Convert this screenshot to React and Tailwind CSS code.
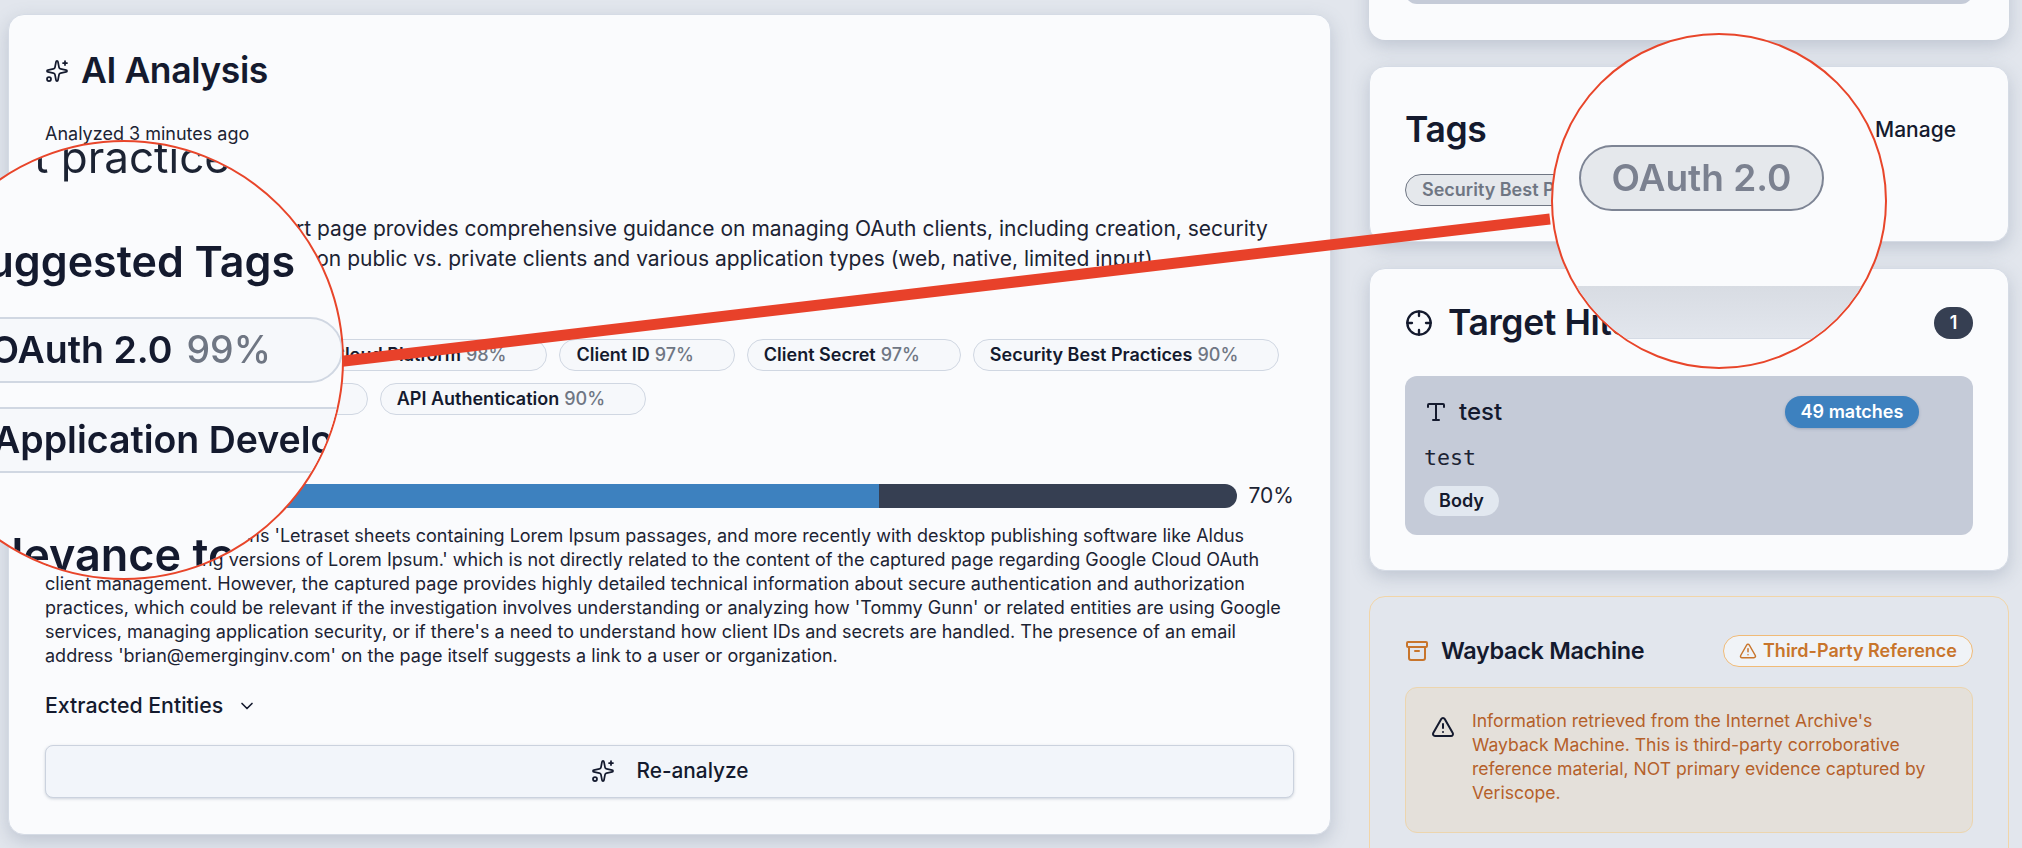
import { Sparkles, ChevronDown, Crosshair, Type, Archive, TriangleAlert } from 'lucide-react'

const suggestedTags = [
  { name: 'OAuth 2.0', score: 99 },
  { name: 'Google Cloud Platform', score: 98 },
  { name: 'Client ID', score: 97 },
  { name: 'Client Secret', score: 97 },
  { name: 'Security Best Practices', score: 90 },
  { name: 'Application Development', score: 90 },
  { name: 'API Authentication', score: 90 },
]

function TagChip({ name, score }) {
  return (
    <span className="inline-flex h-8 items-center gap-[5px] rounded-full border border-[#d0d7e2] bg-[#f6f8fb] pl-4 pr-10 text-lg font-semibold text-[#141a2e]">
      {name}
      <span className="font-medium text-[#6f7683]">{score}%</span>
    </span>
  )
}

function AnalysisCard() {
  return (
    <div className="mt-[14px] h-[821px] w-[1323px] shrink-0 rounded-2xl border border-[#d5dbe5] bg-[#fafbfd] px-9 pt-[36px] text-[#1c2333] shadow-[0_6px_18px_rgba(100,116,139,0.28)]">
      <div className="flex h-10 items-center gap-3">
        <Sparkles className="h-6 w-6 text-[#141a2e]" strokeWidth={1.75} />
        <h2 className="text-[35.5px] font-semibold tracking-[-0.4px] text-[#141a2e]">AI Analysis</h2>
      </div>
      <p className="mt-[31px] text-lg leading-6">Analyzed 3 minutes ago</p>
      <p className="mt-[68px] pr-4 text-[21px] leading-[30px]">
        This Google Cloud support page provides comprehensive guidance on managing OAuth clients, including creation, security best practices, with details on public vs. private clients and various application types (web, native, limited input).
      </p>
      <div className="mt-[65px] flex flex-wrap gap-3">
        {suggestedTags.map((tag) => (
          <TagChip key={tag.name} {...tag} />
        ))}
      </div>
      <div className="mt-[65px] flex items-center gap-3">
        <div className="h-6 flex-1 overflow-hidden rounded-r-full bg-[#363f52]">
          <div className="h-full w-[70%] bg-[#3d81bf]" />
        </div>
        <span className="text-[21px]">70%</span>
      </div>
      <p className="mt-3 text-lg leading-6">
        The target string mentions 'Letraset sheets containing Lorem Ipsum passages, and more recently with desktop publishing software like Aldus PageMaker including versions of Lorem Ipsum.' which is not directly related to the content of the captured page regarding Google Cloud OAuth client management. However, the captured page provides highly detailed technical information about secure authentication and authorization practices, which could be relevant if the investigation involves understanding or analyzing how 'Tommy Gunn' or related entities are using Google services, managing application security, or if there's a need to understand how client IDs and secrets are handled. The presence of an email address 'brian@emerginginv.com' on the page itself suggests a link to a user or organization.
      </p>
      <div className="mt-6 flex h-7 items-center gap-[14px] text-[21.3px] font-medium text-[#141a2e]">
        Extracted Entities
        <ChevronDown className="h-5 w-5" />
      </div>
      <button className="mt-[25px] flex h-[53px] w-full items-center justify-center gap-[22px] rounded-lg border border-[#cbd2de] bg-[#f2f5fa] text-[20.8px] font-medium text-[#141a2e] shadow-[0_1px_3px_rgba(100,116,139,0.3)]">
        <Sparkles className="h-6 w-6" strokeWidth={1.75} />
        Re-analyze
      </button>
    </div>
  )
}

function TagsCard() {
  return (
    <div className="h-[176px] rounded-2xl border border-[#d5dbe5] bg-[#fafbfd] px-[35px] pt-[43px] shadow-[0_6px_18px_rgba(100,116,139,0.28)]">
      <div className="flex h-10 items-center justify-between">
        <h3 className="text-[35.5px] font-semibold tracking-[-0.4px] text-[#141a2e]">Tags</h3>
        <span className="pr-[17px] text-[21px] font-medium text-[#141a2e]">Manage</span>
      </div>
      <div className="mt-[24px] flex gap-3">
        <span className="flex h-8 items-center rounded-full border border-[#6f7683] bg-[#e5e8ec] px-4 text-lg font-semibold text-[#6f7683]">
          Security Best Practices
        </span>
      </div>
    </div>
  )
}

function TargetHitsCard() {
  return (
    <div className="h-[303px] rounded-2xl border border-[#d5dbe5] bg-[#fafbfd] px-[35px] pt-[38px] shadow-[0_6px_18px_rgba(100,116,139,0.28)]">
      <div className="flex h-8 items-center justify-between">
        <div className="flex items-center gap-[15px]">
          <Crosshair className="h-7 w-7 text-[#141a2e]" />
          <h3 className="text-[35.5px] font-semibold tracking-[-0.4px] text-[#141a2e]">Target Hits</h3>
        </div>
        <span className="flex h-8 w-[39px] items-center justify-center rounded-full bg-[#363f52] text-lg font-semibold text-white">1</span>
      </div>
      <div className="mt-[37px] h-[159px] rounded-xl bg-[#c5cbd8] pl-[19px] pr-[54px] pt-5">
        <div className="flex h-8 items-center justify-between">
          <div className="flex items-center gap-[11px]">
            <Type className="h-6 w-6 text-[#141a2e]" />
            <span className="text-2xl font-medium text-[#141a2e]">test</span>
          </div>
          <span className="flex h-8 w-[134px] items-center justify-center rounded-full bg-[#3d81bf] text-lg font-semibold text-white shadow-[0_1px_3px_rgba(60,80,120,0.3)]">49 matches</span>
        </div>
        <p className="mt-4 font-['DejaVu_Sans_Mono',monospace] text-[21.6px] font-light leading-7 text-[#1c2333]">test</p>
        <span className="mt-[14px] inline-flex h-[30px] w-[75px] items-center justify-center rounded-full bg-[#e2e8f0] text-lg font-semibold text-[#141a2e]">Body</span>
      </div>
    </div>
  )
}

function WaybackCard() {
  return (
    <div className="-mt-px h-[300px] rounded-2xl border border-[#f1d5a8] bg-[#e2e6ed] px-[35px] pt-[38px]">
      <div className="flex h-8 items-center justify-between">
        <div className="flex items-center gap-3">
          <Archive className="h-6 w-6 text-[#c8752c]" />
          <h3 className="text-[23.4px] font-semibold tracking-[-0.3px] text-[#141a2e]">Wayback Machine</h3>
        </div>
        <span className="flex h-8 items-center gap-[6px] rounded-full border border-[#f0bb78] bg-[#f0f3f7] px-[15px] text-lg font-semibold text-[#c8752c]">
          <TriangleAlert className="h-[18px] w-[18px]" />
          Third-Party Reference
        </span>
      </div>
      <div className="mt-5 flex h-[146px] gap-[17px] rounded-xl border border-[#ecd5ae] bg-[#e4e0da] pl-[25px] pr-7 pt-[21px]">
        <TriangleAlert className="mt-[6px] h-6 w-6 shrink-0 text-[#141a2e]" />
        <p className="text-[17.6px] leading-6 text-[#b5602a]">
          Information retrieved from the Internet Archive's Wayback Machine. This is third-party corroborative reference material, NOT primary evidence captured by Veriscope.
        </p>
      </div>
    </div>
  )
}

// Callout overlay: two magnifier circles and the connector between them
function Callout() {
  return (
    <>
      <svg className="pointer-events-none absolute inset-0 h-full w-full" viewBox="0 0 2022 848">
        <line x1="340" y1="361.5" x2="1550" y2="219" stroke="#e8412a" strokeWidth="11" />
      </svg>
      <div className="absolute left-[-96px] top-[140px] h-[440px] w-[440px] overflow-hidden rounded-full border-2 border-[#e8452a] bg-[#fafbfd] text-[#141a2e]">
        <div className="absolute inset-0 blur-[0.6px]">
          <span className="absolute left-[128px] top-[-15px] whitespace-nowrap text-[44px] leading-[60px] text-[#1c2333]">t practices</span>
          <span className="absolute right-[47px] top-[89px] whitespace-nowrap text-[43px] font-semibold leading-[60px]">Suggested Tags</span>
          <div className="absolute left-[20px] top-[175px] flex h-[66px] w-[417px] items-center justify-end gap-[14px] rounded-[33px] border-2 border-[#d0d7e2] bg-[#f6f8fb] pr-[70px] text-[37.5px] font-semibold">
            OAuth 2.0
            <span className="font-medium text-[#6f7683]">99%</span>
          </div>
          <div className="absolute left-[60px] top-[265px] flex h-[66px] w-[700px] items-center rounded-[33px] border-2 border-[#d0d7e2] bg-[#f6f8fb] pl-[25px] text-[37.5px] font-semibold">
            Application Development
          </div>
          <span className="absolute left-[50px] top-[383px] whitespace-nowrap text-[45px] font-semibold leading-[60px]">Relevance to Target</span>
        </div>
      </div>
      <div className="absolute left-[1551px] top-[33px] h-[336px] w-[336px] overflow-hidden rounded-full border-2 border-[#e8452a] bg-[#fafbfd]">
        <div className="absolute left-[26px] top-[110px] flex h-[66px] w-[245px] items-center justify-center rounded-[33px] border-2 border-[#7d8494] bg-[#e5e8ec] text-[37px] font-semibold text-[#7b8190] blur-[0.6px]">
          OAuth 2.0
        </div>
        <div className="absolute inset-x-0 top-[251px] h-[53px] border-b border-[#d5dbe5] bg-gradient-to-b from-[#d8dce3] to-[#e2e6ed]" />
      </div>
    </>
  )
}

export default function App() {
  return (
    <div className="relative h-[848px] w-[2022px] overflow-hidden bg-[#e2e6ed] font-['Inter',sans-serif]">
      <div className="flex gap-[38px] pl-2">
        <AnalysisCard />
        <div className="flex w-[640px] shrink-0 flex-col gap-[26px]">
          <div className="-mt-[60px] flex h-[100px] flex-col justify-end rounded-2xl bg-[#fafbfd] px-9 pb-9 shadow-[0_6px_18px_rgba(100,116,139,0.28)]">
            <div className="h-10 rounded-b-xl bg-[#c5cbd8]" />
          </div>
          <TagsCard />
          <TargetHitsCard />
          <WaybackCard />
        </div>
      </div>
      <Callout />
    </div>
  )
}
